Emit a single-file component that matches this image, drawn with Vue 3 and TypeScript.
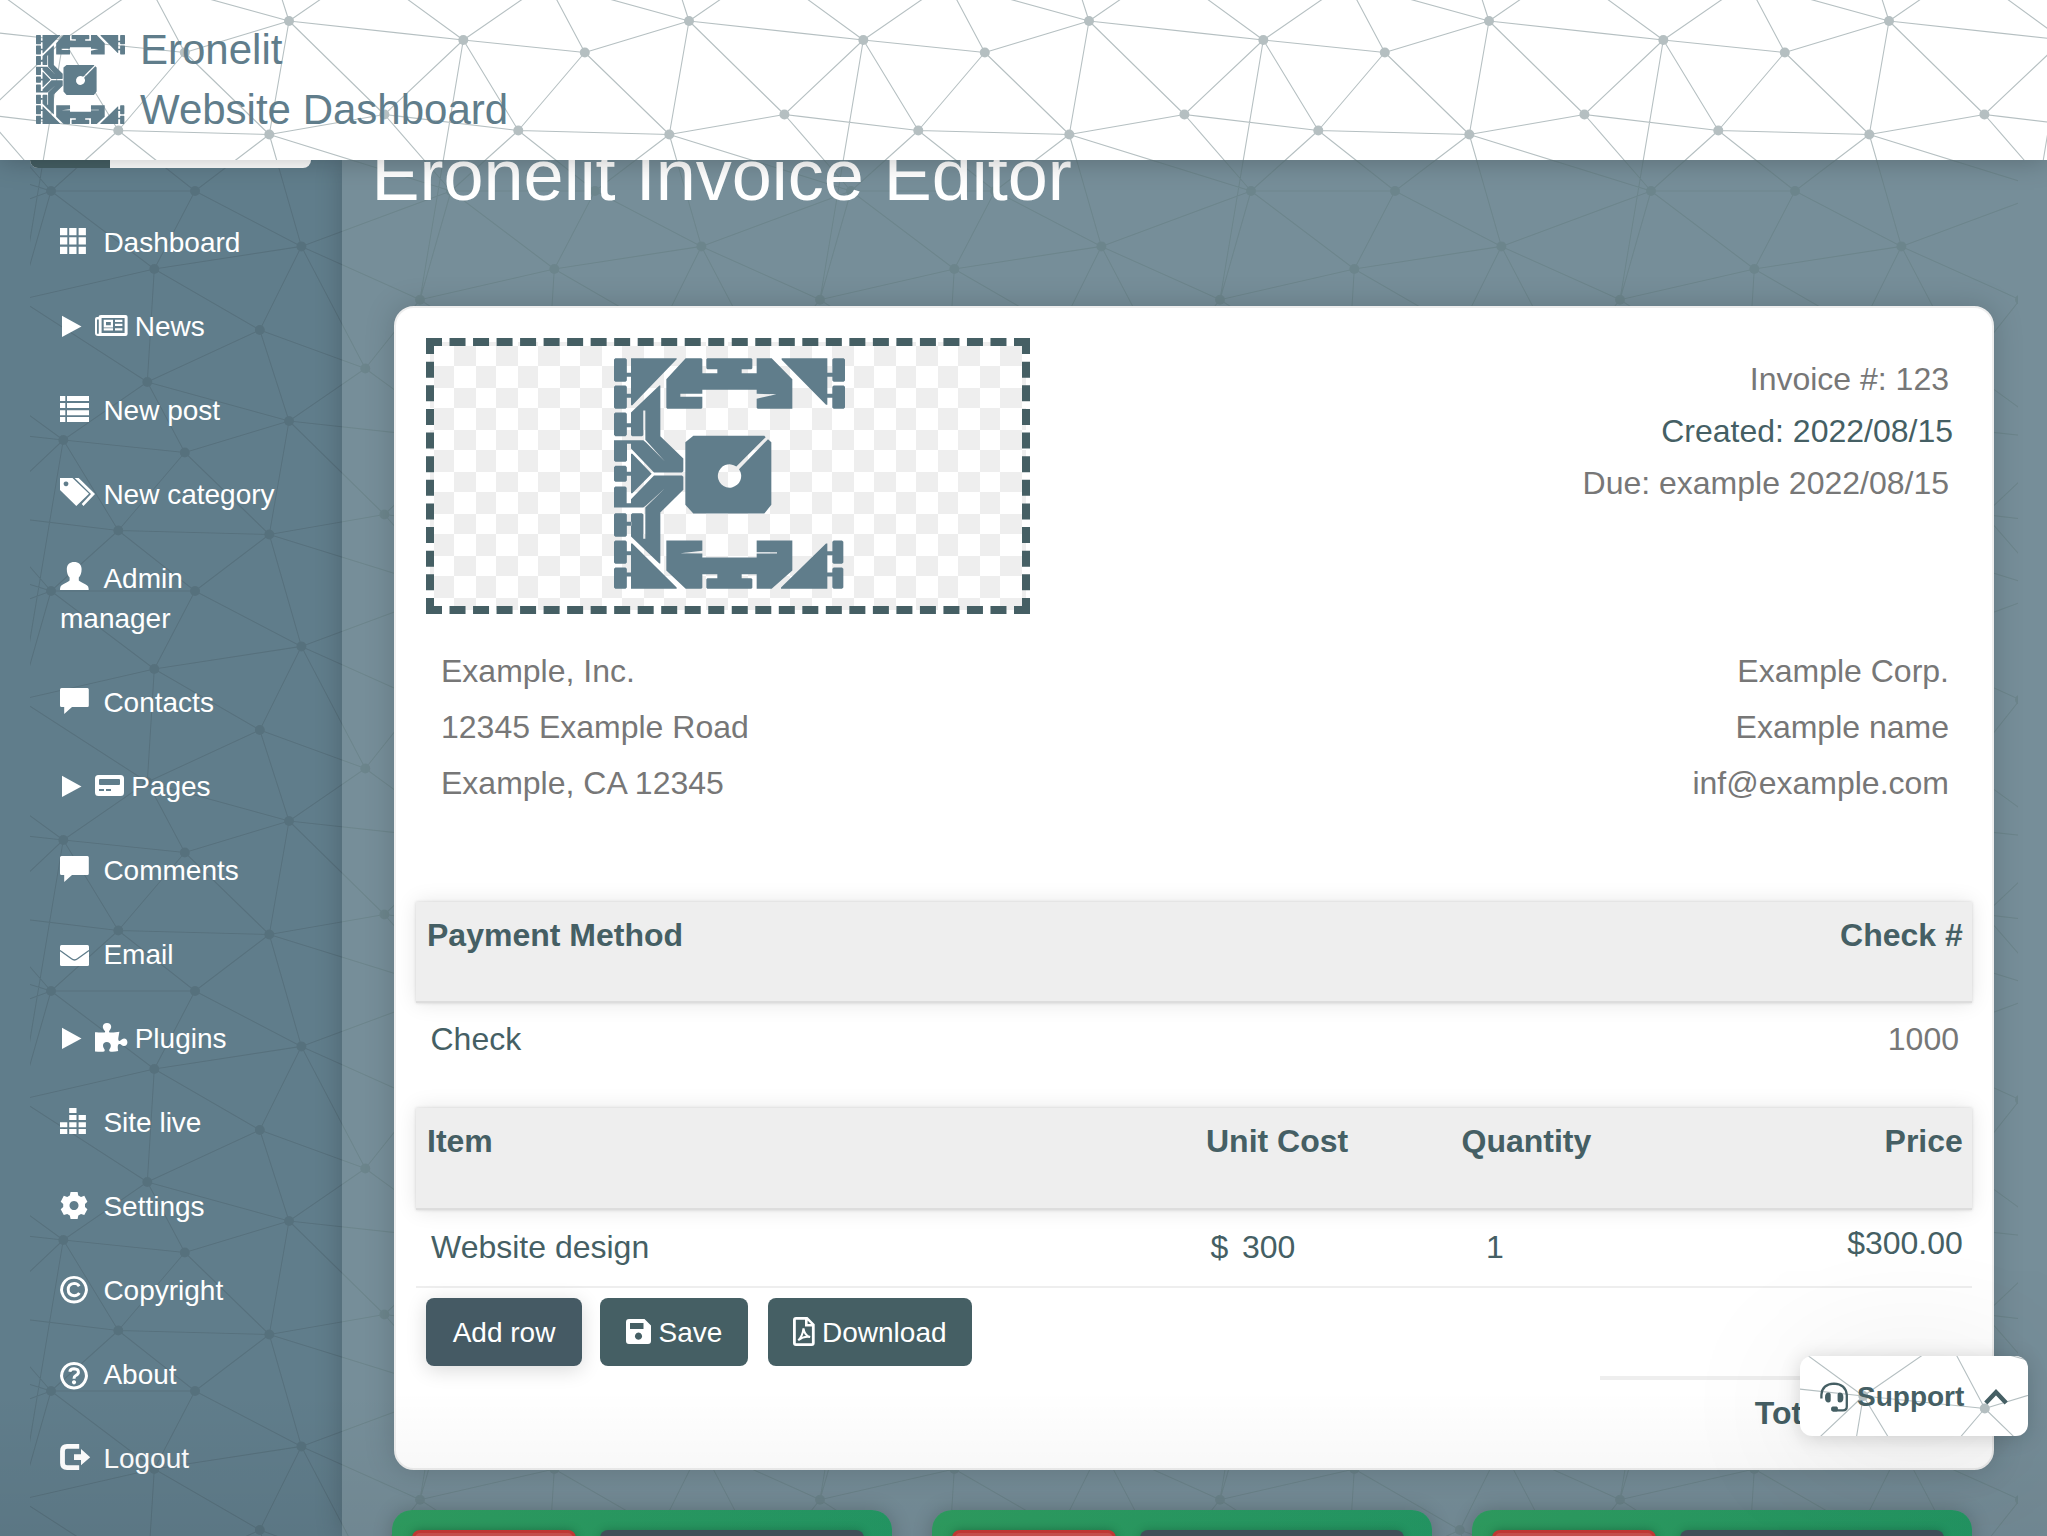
<script setup lang="ts">
interface Icon {
  w: number
  fill?: string
  stroke?: string
  sw?: number
  cut?: string
}
interface NavItem {
  label: string
  icon: Icon
  group?: boolean
}

type Edge = [number, number, number?, number?]

const nodes: [number, number][] = [
  [63.3, 40], [184.8, 52.5], [289, 21], [384.4, 114.5], [118.3, 130.5], [269.3, 134.5], [51, 191],
  [195, 191], [301.4, 246.4], [154.3, 269], [20, 299.7], [259.8, 330], [365.3, 368.5], [147.3, 382],
]
// Each edge: from node, to node, then the tile offset of the second node.
const edges: Edge[] = [
  [0, 1], [1, 2], [2, 0, 1], [0, 4], [0, 3, -1], [1, 4], [1, 5], [2, 5], [2, 3], [5, 3], [3, 4, 1],
  [4, 5], [4, 7], [5, 7], [5, 6, 1], [4, 6], [3, 6, 1], [6, 7], [5, 8], [7, 8], [7, 9], [6, 9],
  [8, 6, 1], [9, 8], [8, 10, 1], [6, 10], [10, 9], [8, 11], [8, 12], [9, 11], [9, 13], [11, 13],
  [11, 12], [12, 2, 0, 1], [12, 10, 1], [11, 2, 0, 1], [13, 2, 0, 1], [13, 0, 0, 1], [13, 1, 0, 1],
  [10, 0], [10, 13], [12, 0, 1, 1],
]
const T = 400

function mesh(color: string, opacity: number): string {
  let lines = ''
  for (const [a, b, ox = 0, oy = 0] of edges) {
    for (const sx of [-1, 0, 1]) {
      for (const sy of [-1, 0, 1]) {
        const [x1, y1] = nodes[a]
        const [x2, y2] = nodes[b]
        lines += `M${x1 + sx * T} ${y1 + sy * T}L${x2 + (ox + sx) * T} ${y2 + (oy + sy) * T}`
      }
    }
  }
  const dots = nodes.map(([x, y]) => `<circle cx='${x}' cy='${y}' r='5'/>`).join('')
  const svg = `<svg xmlns='http://www.w3.org/2000/svg' width='${T}' height='${T}' viewBox='0 0 ${T} ${T}'><g opacity='${opacity}' fill='${color}' stroke='none'><path d='${lines}' fill='none' stroke='${color}' stroke-width='1.1'/>${dots}</g></svg>`
  return `url("data:image/svg+xml,${encodeURIComponent(svg).replace(/'/g, '%27')}")`
}

const headerMesh = mesh('#455f64', 0.4)
const sideMesh = mesh('#455a64', 0.36)
const mainMesh = mesh('#4f6a66', 0.26)

const r = (x: number, y: number, w: number, h: number) => `M${x} ${y}h${w}v${h}h${-w}z`

const bubble: Icon = { w: 36, fill: 'M1.5 2H27.5Q28.8 2 28.8 3.5V19.5Q28.8 21 27.5 21H12L4.2 28V21H1.5Q0 21 0 19.5V3.5Q0 2 1.5 2z' }

const items: NavItem[] = [
  { label: 'Dashboard', icon: { w: 36, fill: [2, 11.3, 20.7].map((y) => [0, 9.2, 18.6].map((x) => r(x, y, 7.3, 7.2)).join('')).join('') } },
  {
    label: 'News',
    group: true,
    icon: {
      w: 31.5,
      fill: 'M6 5H30.5Q32.6 5 32.6 7V24Q32.6 26 30.5 26H3Q0 26 0 23V9Q0 7 2 7H3.5Q3.5 5 6 5zM6.6 8V23H29.6V8zM3.2 9.5H2V22.5Q2 24 3 24Q3.8 24 3.8 22.5V9.5z' +
        'M8.7 9.8H18V17.4H8.7zM11 12V15.3H15.8V12z' + r(20, 9.8, 7.4, 2.2) + r(20, 13.7, 7.4, 2.2) + r(20, 18.2, 7.4, 2.3) + r(8.7, 18.2, 9.3, 2.3),
    },
  },
  { label: 'New post', icon: { w: 36, fill: [2, 9, 16.2, 23].map((y) => r(0, y, 5.3, 5) + r(7, y, 22, 5)).join('') } },
  { label: 'New category', icon: { w: 36, fill: 'M0 0H12.5L29 15.7L16.3 28L0 12zM6 3.4a2.4 2.4 0 1 0 .01 0zM14.7 0H18.7L35 16L23.5 28L21.7 26L31 16z' } },
  { label: 'Admin manager', icon: { w: 36, fill: 'M14.2 0C10 0 6.8 2.5 6.8 7C6.8 11 7.8 13.8 9.6 15.6V18.4C7.5 20.5 1.5 22.2 .6 24.6C.1 25.8 0 27 0 28H28.7C28.7 27 28.6 25.8 28.1 24.6C27 22.2 21 20.5 18.8 18.4V15.6C20.6 13.8 21.6 11 21.6 7C21.6 2.5 18.4 0 14.2 0z' } },
  { label: 'Contacts', icon: bubble },
  { label: 'Pages', group: true, icon: { w: 28, fill: 'M3.5 5H25.5Q29 5 29 8.5V22.5Q29 26 25.5 26H3.5Q0 26 0 22.5V8.5Q0 5 3.5 5zM5 9Q4 9 4 10V14Q4 15 5 15H24Q25 15 25 14V10Q25 9 24 9z' + r(4, 19, 5, 2) + r(11, 19, 5, 2) } },
  { label: 'Comments', icon: bubble },
  { label: 'Email', icon: { w: 36, fill: 'M1.5 7H27.5Q29 7 29 8.5V26.5Q29 28 27.5 28H1.5Q0 28 0 26.5V8.5Q0 7 1.5 7z', cut: 'M0 12.4L11.5 20.8Q14.5 23.2 17.5 20.8L29 12.4' } },
  {
    label: 'Plugins',
    group: true,
    icon: {
      w: 31.5,
      fill: 'M0 10.2C3 10.2 7 11 9.6 10.4C11.6 9.6 7.8 7.8 7.8 4.8C7.8 2.5 9.5 1 12 1C14.5 1 16.2 2.5 16.2 4.8C16.2 7.6 12.8 9.4 14.6 10.4C17 11 21 10.2 24.4 9.8C24 13 22.6 17.4 23.8 18.8C25.5 20 26.3 16.6 29 16.6C31 16.6 32.4 18 32.4 20.3C32.4 22.6 31 24.1 29 24.1C26.5 24.1 26 21.3 24 22.1C22.2 23 22.8 26.5 23.2 29C20.5 29.6 17 30 14.8 29.4C13 28 16 26.5 15.8 23.6C15.6 21.2 14 20 11.8 20C9.5 20 8 21.4 8 23.6C8 26.5 11 28 9.2 29.4C7 30 3 29.6 0 29.4z',
    },
  },
  { label: 'Site live', icon: { w: 36, fill: r(9.2, 2, 7.3, 5) + [9.2, 18.6].map((x) => r(x, 9, 7.3, 5)).join('') + [16.2, 23].map((y) => [0, 9.2, 18.6].map((x) => r(x, y, 7.3, 5)).join('')).join('') } },
  {
    label: 'Settings',
    icon: {
      w: 36,
      fill: 'M10.6 2H17.6L18.3 5.4L21 7L24.3 5.8L27.4 11.8L25 14V17L27.4 19.2L24.3 25L21 24L18.3 25.5L17.6 29H10.6L9.8 25.5L7.2 24L3.8 25L.7 19.2L3.2 17V14L.7 11.8L3.8 5.8L7.2 7L9.8 5.4zM14 11a4.5 4.5 0 1 0 .01 0z',
    },
  },
  { label: 'Copyright', icon: { w: 36, stroke: 'M14 3.4a12.3 12.3 0 1 0 .01 0zM19.2 12.2Q17.6 9.4 14.2 9.4Q8.2 9.9 8.2 15.6Q8.2 21.3 14.2 21.8Q17.6 21.8 19.4 19', sw: 2.9 } },
  { label: 'About', icon: { w: 36, stroke: 'M14 5.4a12.3 12.3 0 1 0 .01 0zM9.8 13.7Q10.3 10.8 14 10.8Q18.4 11 18.4 14.2Q18.4 16.2 15.8 17.5Q14 18.4 14 20.8', sw: 3, fill: 'M14 22.2a2.1 2.1 0 1 0 .01 0z' } },
  { label: 'Logout', icon: { w: 36, stroke: 'M19.2 4.4H7Q2.5 4.4 2.5 9V21Q2.5 25.6 7 25.6H19.2', sw: 4.8, fill: 'M14 12.3H21V7L30.2 15.2L21 23.2V18H14z' } },
]

const address: string[] = ['Example, Inc.', '12345 Example Road', 'Example, CA 12345']
const client: string[] = ['Example Corp.', 'Example name', 'inf@example.com']

const tab = (x: number, y: number, w: number, h: number) =>
  `M${x + 4} ${y}h${w - 8}l4 4v${h - 8}l-4 4h${8 - w}l-4-4v${8 - h}z`

const logoPath = [
  [55, 71], [137, 70], [218, 71], [378, 48], [520, 71], [602, 70], [683, 64],
].map(([y, h]) => tab(74, y, 38.5, h)).join('') +
  [105, 168, 256, 402, 552, 640, 704].map((y) => r(112, y - 6, 14, 12)).join('') +
  [105, 168, 640, 704].map((y) => r(713, y - 6, 17, 12)).join('') +
  tab(729, 55, 38, 71) + tab(729, 137, 38, 70) + tab(729, 602, 33, 70) + tab(729, 683, 33, 64) +
  'M125 55H262V58L129 196H125z' +
  'M289 55H336L339 58V100H384V88H354L351 85V58L354 55H486L489 58V85L486 88H457V100H502V55H547L609 118V207H505L502 204V177L561 163L502 162V150H339V162H273V171H339V204L336 207H234L231 204V118z' +
  'M577 55H714V195H710L577 60z' +
  'M210 137H213V289L282 356V394L278 398H194L125 326V312H113V362L109 366H78L74 362V301H162L170 308L227 365L168 300V212H162V286L158 289H129L125 286V218z' +
  'M125 342H129L187 402L129 460H125z' +
  'M210 671H213V518L282 450V411L278 407H194L125 478V490H112V444L108 440H78L74 444V503H162L170 497L227 445L168 503V597H162V524L158 520H129L125 524V590z' +
  'M125 611H129L262 743V747H125z' +
  'M231 602H339V633L273 640L339 641V653H502V641H563V637H502V602H609V692L547 747H502V703H457V715H486L489 718V744L486 747H354L351 744V718L354 715H384V703H339V744L336 747H289L231 692z' +
  'M710 611H714V747H575V743z' +
  'M312 288H525L529 292L441 380A35 35 0 1 0 449 388L536 298L546 307V495L525 521H312L288 495V307z'
</script>

<template>
  <div class="page">
    <header class="top">
      <svg class="top-logo" viewBox="74 55 693 692"><path :d="logoPath" /></svg>
      <div class="brand">
        <div>Eronelit</div>
        <div>Website Dashboard</div>
      </div>
    </header>

    <div class="body">
      <aside class="side">
        <div class="search"><span class="search-btn"></span></div>
        <nav>
          <a v-for="item in items" :key="item.label" class="nav-item">
            <svg v-if="item.group" class="ico" width="35" height="32"><path d="M2 5.7L21.5 16.5L2 27z" /></svg>
            <svg class="ico" :class="item.group ? 'sub' : 'lead'" :width="item.icon.w" height="32">
              <path v-if="item.icon.fill" :d="item.icon.fill" fill-rule="evenodd" />
              <path v-if="item.icon.stroke" class="line" :d="item.icon.stroke" :stroke-width="item.icon.sw" />
              <path v-if="item.icon.cut" class="cut" :d="item.icon.cut" />
            </svg>{{ item.label }}
          </a>
        </nav>
      </aside>

      <main class="main">
        <h1>Eronelit Invoice Editor</h1>

        <section class="invoice">
          <div class="head">
            <div class="drop">
              <svg class="big-logo" viewBox="74 55 693 692"><path :d="logoPath" /></svg>
            </div>
            <div class="meta">
              <div>Invoice #: 123</div>
              <div class="created">Created: 2022/08/15</div>
              <div>Due: example 2022/08/15</div>
            </div>
          </div>

          <div class="parties">
            <div><div v-for="l in address" :key="l">{{ l }}</div></div>
            <div class="right"><div v-for="l in client" :key="l">{{ l }}</div></div>
          </div>

          <div class="bar"><span>Payment Method</span><span class="end">Check #</span></div>
          <div class="pay-row"><span>Check</span><span class="end gray">1000</span></div>

          <div class="bar items">
            <span>Item</span><span class="unit">Unit Cost</span><span>Quantity</span><span class="end">Price</span>
          </div>
          <div class="row items">
            <span class="name">Website design</span>
            <span class="cost"><i>$</i>300</span>
            <span class="qty">1</span>
            <span class="end price">$300.00</span>
          </div>

          <div class="actions">
            <button class="btn add">Add row</button>
            <button class="btn save">
              <svg width="25.5" height="30">
                <path fill-rule="evenodd" d="M3 3H18.5L25 9.5V25Q25 28 22 28H3Q0 28 0 25V6Q0 3 3 3zM4 7V13H17.5V7zM12.5 16.6a3.6 3.6 0 1 0 .01 0z" />
              </svg>Save
            </button>
            <button class="btn down">
              <svg width="22" height="30">
                <path fill-rule="evenodd" d="M3 1H14.5L21.7 8.2V27Q21.7 30 18.7 30H3Q0 30 0 27V4Q0 1 3 1zM2.8 3.8V27.2H18.9V10.5H12V3.8zM14.6 4.6V7.9H18z" />
                <path class="pdf" d="M5.2 24.2Q9.5 20.5 10.5 12.3Q11.5 19.5 17.2 21Q11 19.6 5.2 24.2z" />
              </svg>Download
            </button>
          </div>

          <div class="total"><span>Total: $300.00</span></div>
        </section>

        <div class="cards">
          <div v-for="n in 3" :key="n" class="card">
            <span class="red"></span><span class="dark"></span>
          </div>
        </div>
      </main>
    </div>

    <div class="fade"></div>

    <div class="support">
      <svg width="29" height="30" class="headset">
        <path d="M1.4 16.5V13Q2.2 2 14 1.7Q25.6 2 26.8 13V24.5Q26.8 28.4 23 28.4H13" fill="none" stroke="#455f64" stroke-width="2.3" />
        <path d="M5 15.5Q5 10.5 8.5 10.5Q10.7 10.5 10.7 12.5V18.6Q10.7 20.6 8.5 20.6Q5 20.6 5 15.5zM23.4 15.5Q23.4 10.5 19.8 10.5Q17.6 10.5 17.6 12.5V18.6Q17.6 20.6 19.8 20.6Q23.4 20.6 23.4 15.5zM12.6 24.4H16.6Q18 24.4 18 26.9Q18 29.4 16.6 29.4H12.6Q11 29 11 26.9Q11 24.8 12.6 24.4z" />
      </svg>
      <span>Support</span>
      <svg width="24" height="16" class="chev"><path d="M1.8 14L12 3.2L22.2 14" /></svg>
    </div>
  </div>
</template>

<style>
body {
  margin: 0;
}
</style>

<style scoped>
* {
  box-sizing: border-box;
}
.page {
  position: relative;
  width: 2047px;
  height: 1536px;
  overflow: hidden;
  background: #607d8b;
  font-family: "Liberation Sans", Arial, sans-serif;
}
.top {
  position: relative;
  z-index: 3;
  display: flex;
  height: 160px;
  padding: 20px 0 0 35.5px;
  background: #fff v-bind(headerMesh) 0 0;
  box-shadow: 0 0 26px rgba(0, 0, 0, 0.26);
}
.top-logo {
  width: 89px;
  height: 89px;
  margin-top: 15px;
  fill: #607d8b;
}
.brand {
  margin-left: 15.5px;
  font-size: 42px;
  line-height: 60px;
  color: #607d8b;
}
.body {
  display: flex;
  height: 1376px;
}
.side {
  position: relative;
  width: 342px;
  background: #607d8b;
}
.side::before {
  content: "";
  position: absolute;
  inset: 0 0 0 30px;
  background: v-bind(sideMesh) -30px -160px;
}
.search {
  position: relative;
  display: flex;
  width: 281px;
  height: 8px;
  margin-bottom: 33px;
  margin-left: 30px;
  overflow: hidden;
  border-radius: 0 0 12px 12px;
  background: #fff;
}
.search-btn {
  width: 80px;
  background: #455f64;
}
nav {
  position: relative;
}
.nav-item {
  display: block;
  width: 285px;
  padding: 22px 0 22px 60px;
  font-size: 28px;
  line-height: 40px;
  color: #fff;
}
.ico {
  overflow: visible;
  vertical-align: -6.3px;
  fill: #fff;
}
.lead {
  margin-right: 7.4px;
}
.sub {
  margin-right: 8.2px;
}
.line {
  fill: none;
  stroke: #fff;
}
.cut {
  fill: none;
  stroke: #607d8b;
  stroke-width: 1.3;
}
.main {
  position: relative;
  flex: 1;
  display: flex;
  flex-direction: column;
  background: #768e99;
  box-shadow: 0 0 26px rgba(0, 0, 0, 0.2);
}
.main::before {
  content: "";
  position: absolute;
  inset: 0 29px 0 0;
  background: v-bind(mainMesh) -342px -160px;
}
h1 {
  position: relative;
  flex: none;
  margin: -25px 0 91px 29.5px;
  font-size: 72px;
  font-weight: 400;
  line-height: 80px;
  color: #fff;
}
.invoice {
  position: relative;
  flex: none;
  width: 1600px;
  height: 1164px;
  margin-left: 52px;
  padding: 30px 20px 0;
  border: 2px solid #eee;
  border-radius: 20px;
  background: #fff;
  box-shadow: 0 0 30px rgba(0, 0, 0, 0.17);
  font-size: 32px;
  color: #455f64;
}
.head {
  display: flex;
  justify-content: space-between;
  padding: 0 23px 0 10px;
  color: #777;
}
.drop {
  position: relative;
  z-index: 0;
  width: 604px;
  height: 276px;
  padding: 20.3px 0 0 188px;
}
.drop::before {
  content: "";
  position: absolute;
  z-index: -1;
  inset: 4px;
  background: conic-gradient(from 0deg at 20px 20px, #eee 0 25%, #fff 0 50%, #eee 0 75%, #fff 0) 4px 4px / 42px 42px;
}
.drop::after {
  content: "";
  position: absolute;
  inset: 0;
  border: 8px dashed #455f64;
}
.big-logo {
  display: block;
  width: 231px;
  height: 231px;
  fill: #607d8b;
}
.meta {
  margin-top: 15px;
  line-height: 52px;
  text-align: right;
}
.created {
  margin-right: -4px;
  color: #455f64;
}
.parties {
  display: flex;
  justify-content: space-between;
  margin: 29px 23px 91px 25px;
  line-height: 56px;
  color: #777;
}
.right,
.end {
  text-align: right;
}
.bar {
  display: flex;
  justify-content: space-between;
  height: 101px;
  padding: 8.6px 9.2px 0 11px;
  border-bottom: 2px solid #ddd;
  background: #eee;
  box-shadow: 0 0 20px rgba(0, 0, 0, 0.1), 0 0 3px rgba(0, 0, 0, 0.15);
  font-weight: 700;
  line-height: 48px;
}
.pay-row {
  display: flex;
  justify-content: space-between;
  height: 105px;
  padding: 12px 13px 0 14.5px;
  line-height: 48px;
}
.gray {
  color: #777;
}
.items {
  display: grid;
  grid-template-columns: 777.5px 257px 200px 1fr;
}
.bar.items {
  height: 102px;
}
.unit {
  padding-left: 1.5px;
}
.row {
  height: 78px;
  padding: 12.6px 9.2px 0 11px;
  border-bottom: 2px solid #eee;
  line-height: 48px;
}
.name {
  padding-left: 4px;
}
.cost {
  padding-left: 6px;
}
.cost i {
  display: inline-block;
  width: 31.5px;
  font-style: normal;
}
.qty {
  padding-left: 24.5px;
}
.price {
  margin-top: -3.8px;
}
.actions {
  display: flex;
  margin: 10px 0 0 10px;
}
.btn {
  display: flex;
  align-items: center;
  height: 68px;
  padding: 2px 0 0;
  border: 0;
  border-radius: 8px;
  background: #455f64;
  font: 28px/40px "Liberation Sans", Arial, sans-serif;
  color: #fff;
}
.btn svg {
  fill: #fff;
}
.add {
  width: 156px;
  justify-content: center;
  background: #455a64;
  box-shadow: 0 4px 20px rgba(0, 0, 0, 0.15);
}
.save {
  width: 148px;
  margin-left: 18px;
  padding-left: 26px;
}
.save svg {
  margin: 0 7px 4px 0;
}
.down {
  width: 204px;
  margin-left: 20px;
  padding-left: 25px;
}
.down svg {
  margin: 0 7px 4px 0;
}
.btn .pdf {
  fill: none;
  stroke: #fff;
  stroke-width: 2;
}
.total {
  width: 372px;
  margin: 10px 0 0 1184px;
  padding: 8.6px 8px 0;
  border-top: 4px solid #eee;
  font-weight: 700;
  line-height: 48px;
  text-align: right;
}
.cards {
  position: relative;
  flex: none;
  display: flex;
  gap: 40px;
  margin: 40px 0 -94px 50px;
}
.card {
  display: flex;
  gap: 24px;
  width: 500px;
  height: 120px;
  padding: 20px 0 0 20px;
  border-radius: 20px;
  background: linear-gradient(100deg, #2f9f61, #249a66);
  box-shadow: 0 0 20px rgba(0, 0, 0, 0.2);
}
.red {
  width: 164px;
  height: 68px;
  border: 3px solid #c93a35;
  border-radius: 8px;
  background: #ce514d;
  box-shadow: 0 0 10px rgba(0, 0, 0, 0.25);
}
.dark {
  width: 264px;
  height: 68px;
  border-radius: 8px;
  background: #44525d;
  box-shadow: 0 0 10px rgba(0, 0, 0, 0.2);
}
.fade {
  position: absolute;
  inset: 1390px 0 0 0;
  background: linear-gradient(rgba(0, 0, 0, 0), rgba(0, 0, 0, 0.05));
}
.support {
  position: absolute;
  z-index: 4;
  left: 1800px;
  top: 1356px;
  display: flex;
  align-items: center;
  width: 228px;
  height: 80px;
  padding: 1px 0 0 20px;
  border-radius: 12px;
  background: #fff v-bind(headerMesh) 0 0;
  box-shadow: 0 2px 20px rgba(0, 0, 0, 0.16), 0 10px 140px rgba(0, 0, 0, 0.1);
  font-size: 28px;
  font-weight: 700;
  line-height: 40px;
  color: #455f64;
  fill: #455f64;
}
.headset {
  margin-right: 8px;
  overflow: visible;
}
.chev {
  margin-left: 20px;
}
.chev path {
  fill: none;
  stroke: #455f64;
  stroke-width: 4.4;
}
</style>
